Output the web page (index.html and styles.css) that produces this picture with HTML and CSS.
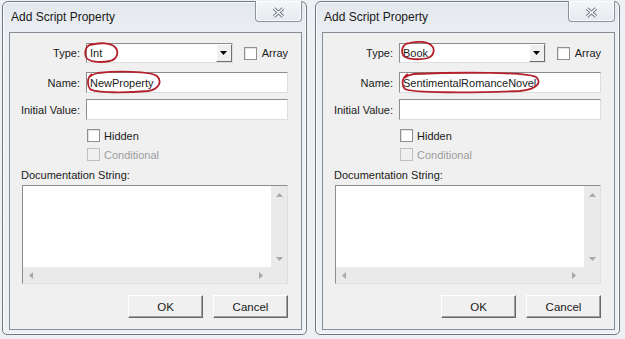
FILE: index.html
```html
<!DOCTYPE html>
<html lang="en">
<head>
    <meta charset="UTF-8">
    <title>Add Script Property</title>
    <link rel="stylesheet" href="styles.css">
</head>
<body>
    <div class="desktop">
        <!-- first dialog: Int / NewProperty -->
        <div class="dialog">
            <div class="title-bar">
                <span class="title">Add Script Property</span>
                <div class="close-btn">
                    <svg width="13" height="11" viewBox="0 0 13 11">
                        <path d="M2 1.5 L11 9.5 M11 1.5 L2 9.5" stroke="#6f7984" stroke-width="3.4" fill="none"/>
                        <path d="M2 1.5 L11 9.5 M11 1.5 L2 9.5" stroke="#ffffff" stroke-width="1.4" fill="none"/>
                    </svg>
                </div>
            </div>
            <div class="client">
                <div class="row">
                    <span class="field-label">Type:</span>
                    <div class="combo">
                        <span class="field-text">Int</span>
                        <span class="combo-btn">
                            <svg width="7" height="4" viewBox="0 0 7 4"><path d="M0 0 H7 L3.5 4 Z" fill="#000"/></svg>
                        </span>
                        <svg class="scribble scribble-type" width="36" height="22" viewBox="0 0 36 22">
                            <path d="M9 2 C2 3 0 9 2 15 C4 20 16 21 26 19 C34 17 35 9 31 5 C27 1 16 0 7 3" stroke="#b3222c" stroke-width="1.8" fill="none"/>
                        </svg>
                    </div>
                    <div class="check check-array"><span class="box"></span>Array</div>
                </div>
                <div class="row row-name">
                    <span class="field-label">Name:</span>
                    <div class="input">
                        <span class="field-text">NewProperty</span>
                        <svg class="scribble scribble-name" width="76" height="24" viewBox="0 0 76 24">
                            <path d="M6 4 C1 7 1 15 4 19 C9 23 40 23 62 21 C74 19 76 11 71 6 C64 1 30 1 12 3 C8 4 5 5 4 7" stroke="#b3222c" stroke-width="1.8" fill="none"/>
                        </svg>
                    </div>
                </div>
                <div class="row row-initial">
                    <span class="field-label">Initial Value:</span>
                    <div class="input"></div>
                </div>
                <div class="check check-hidden"><span class="box"></span>Hidden</div>
                <div class="check check-cond disabled"><span class="box"></span>Conditional</div>
                <div class="doc-label">Documentation String:</div>
                <div class="doc-box">
                    <div class="doc-text"></div>
                    <div class="vscroll">
                        <svg width="7" height="4" viewBox="0 0 7 4"><path d="M0 4 H7 L3.5 0 Z" fill="#a9a9a9"/></svg>
                        <svg width="7" height="4" viewBox="0 0 7 4"><path d="M0 0 H7 L3.5 4 Z" fill="#a9a9a9"/></svg>
                    </div>
                    <div class="hscroll">
                        <svg width="4" height="7" viewBox="0 0 4 7"><path d="M4 0 V7 L0 3.5 Z" fill="#a9a9a9"/></svg>
                        <svg width="4" height="7" viewBox="0 0 4 7"><path d="M0 0 V7 L4 3.5 Z" fill="#a9a9a9"/></svg>
                    </div>
                    <div class="corner"></div>
                </div>
                <div class="buttons">
                    <div class="btn">OK</div>
                    <div class="btn">Cancel</div>
                </div>
            </div>
        </div>

        <!-- second dialog: Book / SentimentalRomanceNovel -->
        <div class="dialog">
            <div class="title-bar">
                <span class="title">Add Script Property</span>
                <div class="close-btn">
                    <svg width="13" height="11" viewBox="0 0 13 11">
                        <path d="M2 1.5 L11 9.5 M11 1.5 L2 9.5" stroke="#6f7984" stroke-width="3.4" fill="none"/>
                        <path d="M2 1.5 L11 9.5 M11 1.5 L2 9.5" stroke="#ffffff" stroke-width="1.4" fill="none"/>
                    </svg>
                </div>
            </div>
            <div class="client">
                <div class="row">
                    <span class="field-label">Type:</span>
                    <div class="combo">
                        <span class="field-text">Book</span>
                        <span class="combo-btn">
                            <svg width="7" height="4" viewBox="0 0 7 4"><path d="M0 0 H7 L3.5 4 Z" fill="#000"/></svg>
                        </span>
                        <svg class="scribble scribble-book" width="36" height="20" viewBox="0 0 36 20">
                            <path d="M8 2 C2 4 1 10 3 14 C6 19 20 19 28 17 C35 14 35 7 31 4 C26 0 15 0 6 3" stroke="#b3222c" stroke-width="1.8" fill="none"/>
                        </svg>
                    </div>
                    <div class="check check-array"><span class="box"></span>Array</div>
                </div>
                <div class="row row-name">
                    <span class="field-label">Name:</span>
                    <div class="input">
                        <span class="field-text">SentimentalRomanceNovel</span>
                        <svg class="scribble scribble-novel" width="142" height="23" viewBox="0 0 142 23">
                            <path d="M8 3 C2 6 1 14 5 18 C12 22 70 22 120 20 C138 18 142 11 136 6 C126 1 60 1 14 3 C9 4 6 5 5 7" stroke="#b3222c" stroke-width="1.8" fill="none"/>
                        </svg>
                    </div>
                </div>
                <div class="row row-initial">
                    <span class="field-label">Initial Value:</span>
                    <div class="input"></div>
                </div>
                <div class="check check-hidden"><span class="box"></span>Hidden</div>
                <div class="check check-cond disabled"><span class="box"></span>Conditional</div>
                <div class="doc-label">Documentation String:</div>
                <div class="doc-box">
                    <div class="doc-text"></div>
                    <div class="vscroll">
                        <svg width="7" height="4" viewBox="0 0 7 4"><path d="M0 4 H7 L3.5 0 Z" fill="#a9a9a9"/></svg>
                        <svg width="7" height="4" viewBox="0 0 7 4"><path d="M0 0 H7 L3.5 4 Z" fill="#a9a9a9"/></svg>
                    </div>
                    <div class="hscroll">
                        <svg width="4" height="7" viewBox="0 0 4 7"><path d="M4 0 V7 L0 3.5 Z" fill="#a9a9a9"/></svg>
                        <svg width="4" height="7" viewBox="0 0 4 7"><path d="M0 0 V7 L4 3.5 Z" fill="#a9a9a9"/></svg>
                    </div>
                    <div class="corner"></div>
                </div>
                <div class="buttons">
                    <div class="btn">OK</div>
                    <div class="btn">Cancel</div>
                </div>
            </div>
        </div>
    </div>
</body>
</html>
```

FILE: styles.css
```css
* {
    margin: 0;
    padding: 0;
    box-sizing: border-box;
}

body {
    background-color: #eef1f3;
    font-family: "Liberation Sans", Arial, sans-serif;
    font-size: 11px;
    color: #1a1a1a;
    width: 625px;
    height: 339px;
    overflow: hidden;
}

.desktop {
    display: flex;
    gap: 8px;
    padding: 1px 0 0 2px;
}

.dialog {
    width: 305px;
    height: 334px;
    border: 1px solid #6e7882;
    border-radius: 6px 6px 5px 5px;
    background: linear-gradient(#e3e8ed, #edf0f3 40px, #eef1f4);
    box-shadow: inset 0 0 0 1px #fafbfc;
    display: flex;
    flex-direction: column;
}

.title-bar {
    height: 30px;
    display: flex;
    justify-content: space-between;
    align-items: flex-start;
    padding: 0 4px 0 8px;
}

.title {
    font-size: 12px;
    line-height: 16px;
    padding-top: 7px;
    color: #1a1a1a;
}

.close-btn {
    width: 47px;
    height: 21px;
    margin-top: -1px;
    border: 1px solid #8a949e;
    border-top: none;
    border-radius: 0 0 4px 4px;
    background: linear-gradient(#f4f6f8, #e6eaee);
    box-shadow: inset 0 0 0 1px #fbfcfd;
    display: flex;
    align-items: center;
    justify-content: center;
    padding-top: 2px;
}

.client {
    margin: 0 4px 4px 6px;
    height: 298px;
    border: 1px solid #868f98;
    background-color: #f0f0f0;
    padding: 10px 13px 0 10px;
    display: flex;
    flex-direction: column;
}

.row {
    display: flex;
    align-items: center;
    gap: 6px;
    height: 20px;
}

.row-name {
    margin-top: 9px;
    height: 21px;
}

.row-initial {
    margin-top: 6px;
    height: 21px;
}

.field-label {
    width: 60px;
    flex-shrink: 0;
    text-align: right;
    white-space: nowrap;
}

.combo, .input {
    position: relative;
    height: 100%;
    background-color: #fff;
    border: 1px solid;
    border-color: #8d8d8d #dedede #dedede #8d8d8d;
    display: flex;
    align-items: center;
}

.combo {
    width: 148px;
}

.input {
    flex: 1;
}

.field-text {
    padding-left: 3px;
    flex: 1;
    white-space: nowrap;
}

.combo-btn {
    width: 16px;
    height: 100%;
    background-color: #f0f0f0;
    border: 1px solid;
    border-color: #fff #6f6f6f #6f6f6f #fff;
    display: flex;
    align-items: center;
    justify-content: center;
}

/* red hand-drawn marks over the fields */
.scribble {
    position: absolute;
    pointer-events: none;
}

.scribble-type {
    left: -3px;
    top: -2px;
}

.scribble-book {
    left: 0;
    top: -3px;
}

.scribble-name {
    left: -1px;
    top: -3px;
}

.scribble-novel {
    left: 0;
    top: -2px;
}

.check {
    display: flex;
    align-items: center;
    gap: 4px;
    height: 13px;
}

.box {
    width: 13px;
    height: 13px;
    background-color: #fff;
    border: 1px solid #8f8f8f;
    box-shadow: inset 1px 1px 0 #e2e2e2;
}

.check-array {
    margin-left: 5px;
    gap: 5px;
}

.check-hidden {
    margin: 9px 0 0 67px;
}

.check-cond {
    margin: 6px 0 0 67px;
}

.check.disabled {
    color: #9c9c9c;
}

.check.disabled .box {
    background-color: #f0f0f0;
    border-color: #c0c0c0;
    box-shadow: none;
}

.doc-label {
    margin: 7px 0 0 1px;
    line-height: 14px;
}

.doc-box {
    margin: 3px 0 0 2px;
    height: 99px;
    border: 1px solid;
    border-color: #8d8d8d #e0e0e0 #e0e0e0 #8d8d8d;
    display: grid;
    grid-template-columns: 1fr 16px;
    grid-template-rows: 1fr 16px;
}

.doc-text {
    background-color: #fff;
}

.vscroll {
    background-color: #eaeaea;
    display: flex;
    flex-direction: column;
    justify-content: space-between;
    align-items: center;
    padding: 7px 0 6px;
}

.hscroll {
    background-color: #eaeaea;
    display: flex;
    justify-content: space-between;
    align-items: center;
    padding: 0 8px 0 6px;
}

.corner {
    background-color: #eaeaea;
}

.buttons {
    margin-top: 11px;
    display: flex;
    justify-content: flex-end;
    gap: 10px;
}

.btn {
    width: 75px;
    height: 23px;
    background-color: #f0f0f0;
    border: 1px solid;
    border-color: #fff #696969 #696969 #fff;
    box-shadow: inset -1px -1px 0 #a0a0a0;
    display: flex;
    align-items: center;
    justify-content: center;
    font-size: 11.5px;
}
```
